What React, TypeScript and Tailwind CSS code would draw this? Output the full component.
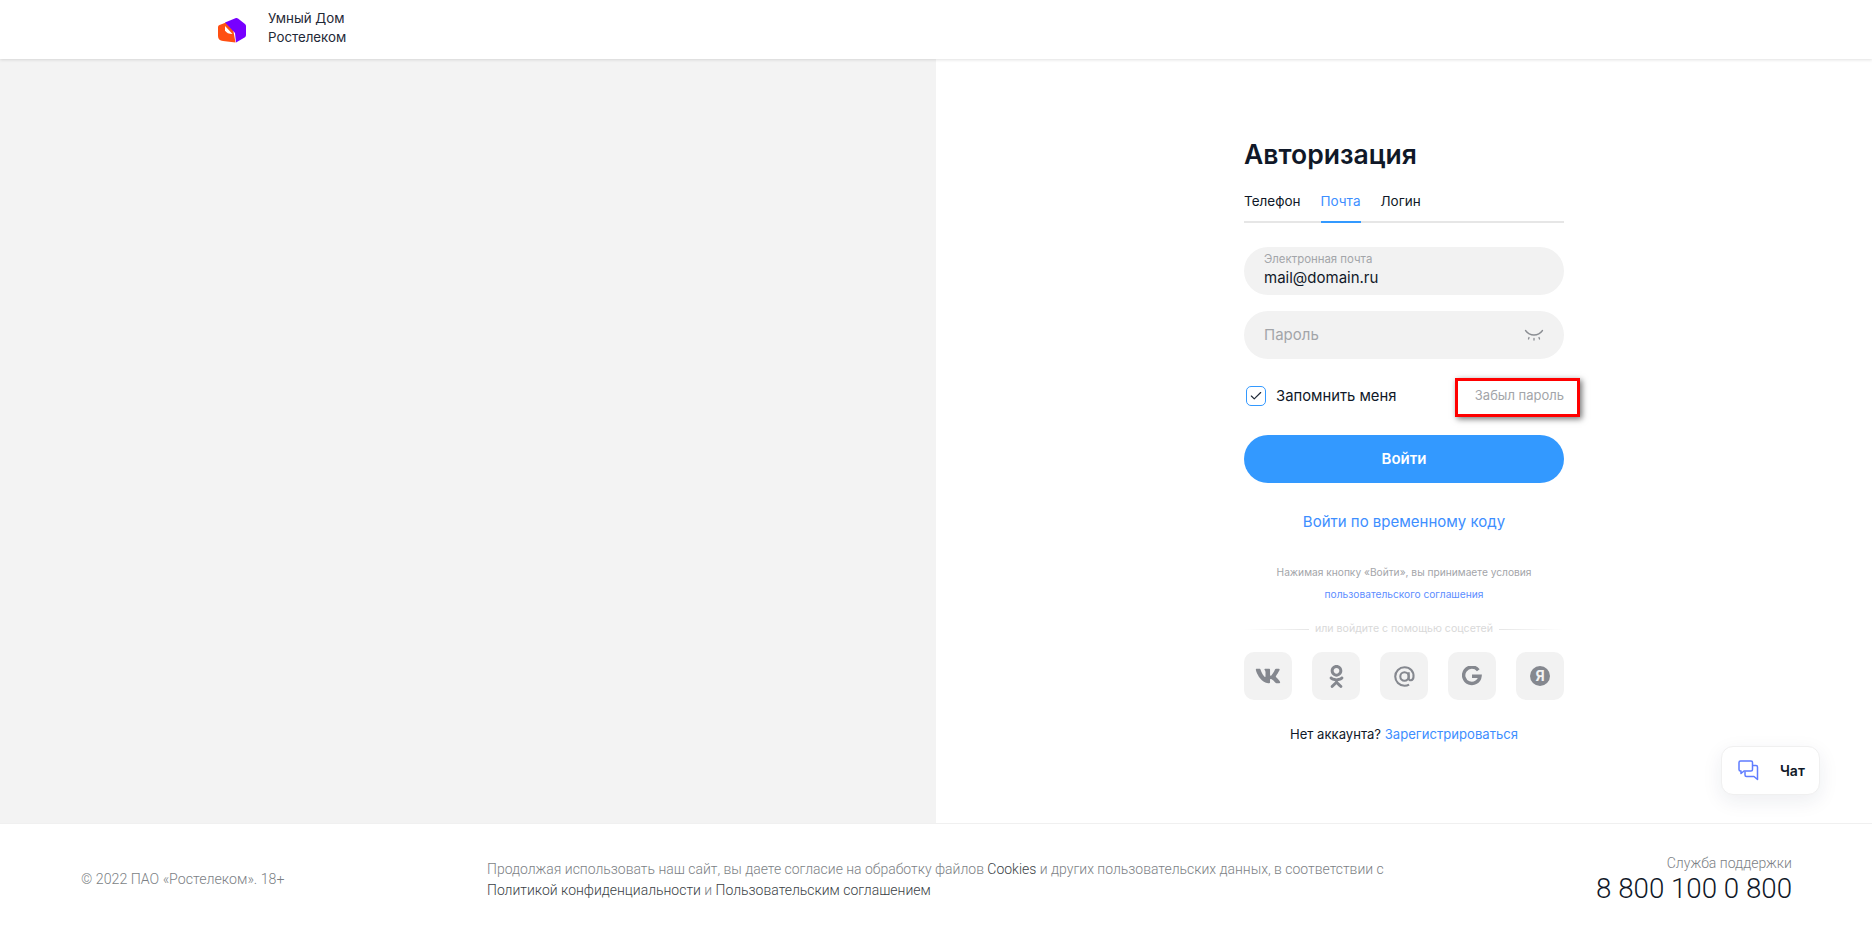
import { FaVk, FaOdnoklassniki } from 'react-icons/fa';
import { Check } from 'lucide-react';
import type { ReactNode } from 'react';

const socials: { name: string; icon: ReactNode }[] = [
  { name: 'vk', icon: <FaVk size={26} /> },
  { name: 'ok', icon: <FaOdnoklassniki size={23} /> },
  {
    name: 'mail',
    icon: (
      <svg width="21" height="21" viewBox="0 0 22 22" fill="none" stroke="currentColor" strokeWidth="2.2">
        <circle cx="11" cy="11" r="4.4" />
        <path d="M15.4 6.6v6.2c0 3 4.6 3 5-1.2C21 5.5 16.8 1.3 11 1.3 5.6 1.3 1.3 5.6 1.3 11s4.3 9.7 9.7 9.7c1.8 0 3.4-.4 4.8-1.2" />
      </svg>
    ),
  },
  {
    name: 'google',
    icon: (
      <svg width="20" height="20" viewBox="0 0 20 20" fill="none" stroke="currentColor" strokeWidth="3.4">
        <path d="M16.3 4.2A8.2 8.2 0 1 0 18 10.2H10" />
      </svg>
    ),
  },
  {
    name: 'yandex',
    icon: (
      <span className="flex h-[20px] w-[20px] items-center justify-center rounded-full bg-[#85888f] text-[14px] leading-none font-bold text-[#f2f2f2]">
        Я
      </span>
    ),
  },
];

function Logo() {
  return (
    <svg width="30" height="26" viewBox="0 0 30 26">
      <path d="M1 10 Q1 8.5 2.5 8 L9 5.5 L16 12 L18.5 25.5 L6 24 Q1 23.5 1 19 Z" fill="#ff4f12" />
      <path d="M8 5.5 L19 1 Q20 .6 21 1.5 L28 7 Q29 8 29 9 L29 18 Q29 19.5 28 20.2 L19 25.5 L18 16 Z" fill="#7700ff" />
      <path d="M8 9 L15.5 17 Q10 17 8 13.5 Z" fill="#ffffff" />
    </svg>
  );
}

function ClosedEye() {
  return (
    <svg width="20" height="14" viewBox="0 0 20 14" fill="none" stroke="#8b8e93" strokeWidth="1.3" strokeLinecap="round">
      <path d="M1.5 2.5C4 6 7 7 10 7s6-1 8.5-4.5" />
      <path d="M5 9.5l-.5 1.5M10 10.5V12M15 9.5l.5 1.5" />
    </svg>
  );
}

function ChatIcon() {
  return (
    <svg width="21" height="21" viewBox="0 0 21 21" fill="none" stroke="#5f7cff" strokeWidth="1.5" strokeLinejoin="round">
      <path d="M2.5 1h10.5a1.5 1.5 0 0 1 1.5 1.5v7a1.5 1.5 0 0 1-1.5 1.5H6l-3 2.5V11H2.5A1.5 1.5 0 0 1 1 9.5v-7A1.5 1.5 0 0 1 2.5 1z" />
      <path d="M14.5 5.5h3.5a1.5 1.5 0 0 1 1.5 1.5v12.5l-3.5-3h-7.5a1.5 1.5 0 0 1-1.5-1.5v-3.5" />
    </svg>
  );
}

function LoginForm() {
  return (
    <div className="relative w-[320px] pt-[77px]">
      <h1 className="text-[26.5px] leading-[36px] font-semibold text-[#101828]">Авторизация</h1>

      {/* Tabs */}
      <div className="mt-[17px] flex gap-[20px] border-b-2 border-[#e6e6e6] text-[13.5px] leading-[20px] h-[34px] text-[#101828]">
        <span className="pt-[2px]">Телефон</span>
        <span className="pt-[2px] h-[34px] border-b-2 border-[#3399ff] text-[#3d8eff]">Почта</span>
        <span className="pt-[2px]">Логин</span>
      </div>

      {/* Inputs */}
      <div className="mt-[24px] h-[48px] rounded-[24px] bg-[#f2f2f2] px-[20px] pt-[4px]">
        <div className="text-[11.4px] leading-[16px] text-[#a3a5a9]">Электронная почта</div>
        <div className="text-[15px] leading-[22px] text-[#101828]">mail@domain.ru</div>
      </div>
      <div className="mt-[16px] flex h-[48px] items-center justify-between rounded-[24px] bg-[#f2f2f2] pl-[20px] pr-[20px]">
        <span className="text-[15px] text-[#a3a5a9]">Пароль</span>
        <ClosedEye />
      </div>

      {/* Remember */}
      <div className="mt-[26px] flex h-[22px] items-center justify-between">
        <label className="flex items-center gap-[10px] pl-[2px] text-[14.8px] text-[#101828]">
          <span className="flex h-[20px] w-[20px] items-center justify-center rounded-[5px] border border-[#3399ff]">
            <Check size={14} strokeWidth={2} className="text-[#1f2937]" />
          </span>
          Запомнить меня
        </label>
        <span className="text-[13px] text-[#a3a5a9]">Забыл пароль</span>
      </div>
      <div className="absolute left-[211px] top-[319px] h-[39px] w-[125px] border-[3px] border-[#ff0000] shadow-[2px_2px_6px_rgba(0,0,0,0.55)]" />

      <button className="mt-[28px] h-[48px] w-full rounded-[24px] bg-[#3399ff] text-[15px] font-semibold text-white">Войти</button>

      <div className="mt-[27px] text-center text-[15px] leading-[24px] text-[#3d8eff]">Войти по временному коду</div>

      {/* Terms */}
      <div className="mt-[27px] text-center text-[10.2px] leading-[22px] text-[#a3a5a9]">
        <div>Нажимая кнопку «Войти», вы принимаете условия</div>
        <div className="text-[#5c8dff]">пользовательского соглашения</div>
      </div>

      {/* Divider */}
      <div className="mt-[16px] flex items-center gap-[6px] text-[10.6px] leading-[16px] text-[#d9d9d9]">
        <span className="h-px flex-1 bg-gradient-to-r from-white to-[#e6e6e6]" />
        или войдите с помощью соцсетей
        <span className="h-px flex-1 bg-gradient-to-l from-white to-[#e6e6e6]" />
      </div>

      {/* Social */}
      <div className="mt-[15px] flex justify-between">
        {socials.map((s) => (
          <div key={s.name} className="flex h-[48px] w-[48px] items-center justify-center rounded-[10px] bg-[#f2f2f2] text-[#85888f]">
            {s.icon}
          </div>
        ))}
      </div>

      <div className="mt-[24px] text-center text-[13.1px] leading-[20px] text-[#101828]">
        Нет аккаунта? <span className="text-[#3d8eff]">Зарегистрироваться</span>
      </div>
    </div>
  );
}

export default function App() {
  return (
    <div className="relative flex h-[936px] flex-col overflow-hidden bg-white font-['Inter',sans-serif]">
      <header className="relative z-10 flex h-[59px] items-center pl-[217px] shadow-[0_1px_3px_rgba(0,0,0,0.12)]">
        <Logo />
        <div className="-mt-[4px] ml-[21px] text-[13.3px] leading-[19px] text-[#1f2937]">
          <div>Умный Дом</div>
          <div>Ростелеком</div>
        </div>
      </header>

      <main className="flex h-[764px]">
        <div className="w-1/2 bg-[#f3f3f3]" />
        <div className="w-1/2 pl-[308px]">
          <LoginForm />
        </div>
      </main>

      <footer className="flex flex-1 items-center border-t border-[#f0f0f0] pl-[81px] pr-[80px] font-['Roboto',sans-serif] font-light text-[#7c7f85]">
        <div className="w-[406px] text-[14.2px]">© 2022 ПАО «Ростелеком». 18+</div>
        <div className="w-[920px] text-[13.97px] leading-[21px]">
          <div>
            Продолжая использовать наш сайт, вы даете согласие на обработку файлов <span className="text-[#3b3f46]">Cookies</span> и других пользовательских данных, в соответствии с
          </div>
          <div>
            <span className="text-[#3b3f46]">Политикой конфиденциальности</span> и <span className="text-[#3b3f46]">Пользовательским соглашением</span>
          </div>
        </div>
        <div className="-mt-[3px] flex-1 text-right">
          <div className="text-[14px] leading-[20px]">Служба поддержки</div>
          <div className="text-[27.7px] leading-[32px] text-[#101828]">8 800 100 0 800</div>
        </div>
      </footer>

      {/* Chat widget */}
      <div className="absolute left-[1721px] top-[746px] flex h-[49px] w-[99px] items-center rounded-[12px] border border-[#f0f0f0] bg-white pl-[16px] shadow-[0_6px_20px_rgba(30,40,80,0.08)]">
        <ChatIcon />
        <span className="ml-[21px] text-[14px] font-semibold text-[#101828]">Чат</span>
      </div>
    </div>
  );
}
